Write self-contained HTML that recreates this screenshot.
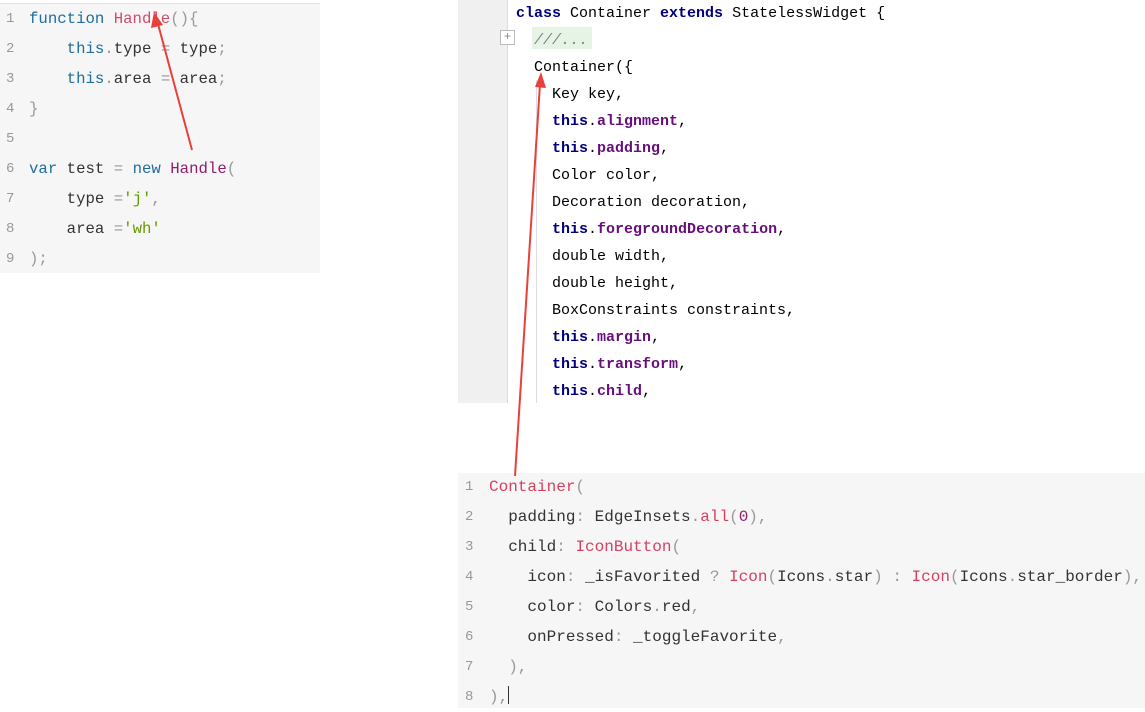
<!DOCTYPE html>
<html><head><meta charset="utf-8"><style>
body{margin:0;width:1145px;height:708px;background:#fff;position:relative;overflow:hidden;font-family:"Liberation Mono",monospace}
.a{position:absolute;white-space:pre;line-height:20px}
#L{position:absolute;left:0;top:3px;width:320px;height:269px;background:#f6f6f6;border-top:1px solid #e2e2e2}
.ln{color:#999;font-size:14px}
.c1{font-size:15.7px;color:#333}
.kw{color:#1f6d9e}.fn{color:#d44a6a}.nw{color:#8f1d6b}.st{color:#690}.pu{color:#999}
#G{position:absolute;left:458px;top:0;width:49px;height:403px;background:#f0f0f0;border-right:1px solid #ddd}
.c2{font-size:15px;color:#000;font-family:"Liberation Mono","Noto Serif CJK SC",monospace}
.b{font-weight:bold;color:#000080}.p{font-weight:bold;color:#660e7a}
#B{position:absolute;left:458px;top:473px;width:687px;height:235px;background:#f6f6f6}
.c3{font-size:16px;color:#333;letter-spacing:0}
.r{color:#d6415f}
</style></head><body>
<div id="L"></div>
<div class="a ln" style="left:6px;top:4px;line-height:30px">1
2
3
4
5
6
7
8
9</div>
<div class="a c1" style="left:29px;top:4px;line-height:30px"><span class="kw">function</span> <span class="fn">Handle</span><span class="pu">(){</span>
    <span class="kw">this</span><span class="pu">.</span>type <span class="pu">=</span> type<span class="pu">;</span>
    <span class="kw">this</span><span class="pu">.</span>area <span class="pu">=</span> area<span class="pu">;</span>
<span class="pu">}</span>

<span class="kw">var</span> test <span class="pu">=</span> <span class="kw">new</span> <span class="nw">Handle</span><span class="pu">(</span>
    type <span class="pu">=</span><span class="st">'j'</span><span class="pu">,</span>
    area <span class="pu">=</span><span class="st">'wh'</span>
<span class="pu">);</span></div>

<div id="G"></div>
<div style="position:absolute;left:536px;top:80px;width:1px;height:323px;background:#ddd"></div>
<div style="position:absolute;left:500px;top:30px;width:13px;height:13px;border:1px solid #bbb;background:#fff;font-size:12px;line-height:13px;text-align:center;color:#888">+</div>
<div style="position:absolute;left:532px;top:27px;width:60px;height:22px;background:#e6f4e6"></div>
<div class="a c2" style="left:516px;top:0px;line-height:27px"><span class="b">class</span> Container <span class="b">extends</span> StatelessWidget {
  <span style="color:#808080;font-style:italic">///...</span>
  Container({
    Key key,
    <span class="b">this</span>.<span class="p">alignment</span>,
    <span class="b">this</span>.<span class="p">padding</span>,
    Color color,
    Decoration decoration,
    <span class="b">this</span>.<span class="p">foregroundDecoration</span>,
    double width,
    double height,
    BoxConstraints constraints,
    <span class="b">this</span>.<span class="p">margin</span>,
    <span class="b">this</span>.<span class="p">transform</span>,
    <span class="b">this</span>.<span class="p">child</span>,</div>

<div id="B"></div>
<div class="a ln" style="left:465px;top:472px;line-height:30px">1
2
3
4
5
6
7
8</div>
<div class="a c3" style="left:489px;top:472px;line-height:30px"><span class="r">Container</span><span class="pu">(</span>
  padding<span class="pu">:</span> EdgeInsets<span class="pu">.</span><span class="r">all</span><span class="pu">(</span><span class="nw">0</span><span class="pu">),</span>
  child<span class="pu">:</span> <span class="r">IconButton</span><span class="pu">(</span>
    icon<span class="pu">:</span> _isFavorited <span class="pu">?</span> <span class="r">Icon</span><span class="pu">(</span>Icons<span class="pu">.</span>star<span class="pu">)</span> <span class="pu">:</span> <span class="r">Icon</span><span class="pu">(</span>Icons<span class="pu">.</span>star_border<span class="pu">),</span>
    color<span class="pu">:</span> Colors<span class="pu">.</span>red<span class="pu">,</span>
    onPressed<span class="pu">:</span> _toggleFavorite<span class="pu">,</span>
  <span class="pu">),</span>
<span class="pu">),</span></div>
<div style="position:absolute;left:508px;top:686px;width:1px;height:18px;background:#333"></div>

<svg style="position:absolute;left:0;top:0" width="1145" height="708">
<g stroke="#e8403a" stroke-width="2" fill="#e8403a">
<line x1="192" y1="150" x2="158" y2="24"/>
<polygon points="154,12 151,28 163,25" stroke="none"/>
<line x1="515" y1="476" x2="540" y2="84"/>
<polygon points="541,72 535,87 546,88" stroke="none"/>
</g></svg>
</body></html>
